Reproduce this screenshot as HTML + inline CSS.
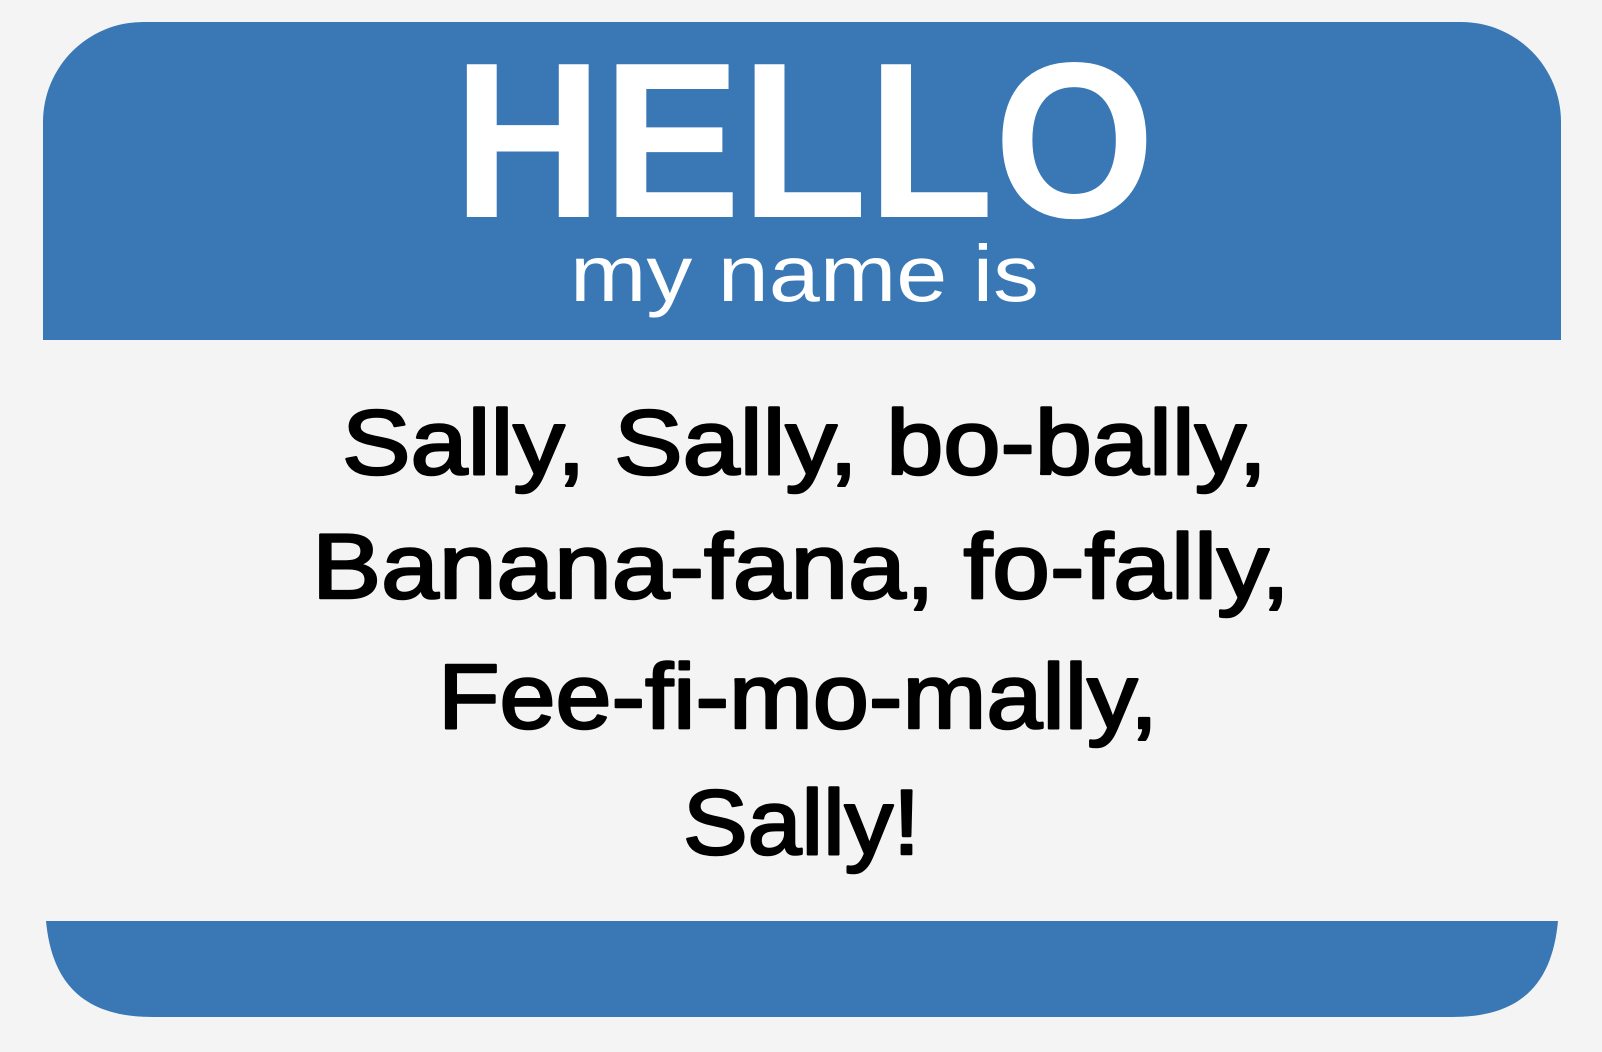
<!DOCTYPE html>
<html><head><meta charset="utf-8"><style>
html,body{margin:0;padding:0;background:#f5f4f4;width:1602px;height:1052px;overflow:hidden}
</style></head><body>
<svg width="1602" height="1052" viewBox="0 0 1602 1052" xmlns="http://www.w3.org/2000/svg">
<rect width="1602" height="1052" fill="#f5f4f4"/>
<path d="M43 340 V122 A100 100 0 0 1 143 22 H1461 A100 100 0 0 1 1561 122 V340 Z" fill="#3a78b5"/>
<path d="M46 921 H1558 C1552 985 1520 1017 1452 1017 H153 C85 1017 52 985 46 921 Z" fill="#3a78b5"/>
<text x="453" y="217" font-family="Liberation Sans, sans-serif" font-weight="bold" font-size="222" fill="#fff" textLength="702" lengthAdjust="spacingAndGlyphs">HELLO</text>
<text x="570" y="301" font-family="Liberation Sans, sans-serif" font-size="80" fill="#fff" textLength="469" lengthAdjust="spacingAndGlyphs">my name is</text>
<g font-family="Liberation Sans, sans-serif" font-size="92" fill="#000" stroke="#000" stroke-width="2.5" stroke-linejoin="round">
<text x="342" y="474" textLength="925" lengthAdjust="spacingAndGlyphs">Sally, Sally, bo-bally,</text>
<text x="312" y="598" textLength="978" lengthAdjust="spacingAndGlyphs">Banana-fana, fo-fally,</text>
<text x="438" y="728" textLength="720" lengthAdjust="spacingAndGlyphs">Fee-fi-mo-mally,</text>
<text x="683" y="854" textLength="237" lengthAdjust="spacingAndGlyphs">Sally!</text>
</g>
</svg>
</body></html>
